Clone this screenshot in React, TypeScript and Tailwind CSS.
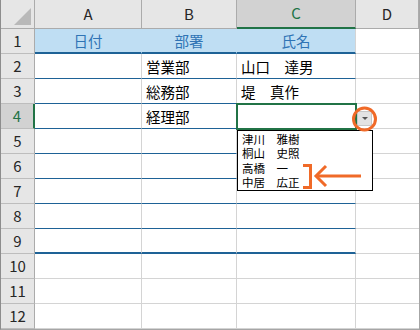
import React from 'react';

const font = { fontFamily: '"Noto Sans CJK JP", "Noto Sans", sans-serif' };

type Row = { n: number; a?: string; b?: string; c?: string };

const rows: Row[] = [
  { n: 1, a: '日付', b: '部署', c: '氏名' },
  { n: 2, b: '営業部', c: '山口　達男' },
  { n: 3, b: '総務部', c: '堤　真作' },
  { n: 4, b: '経理部' },
  { n: 5 },
  { n: 6 },
  { n: 7 },
  { n: 8 },
  { n: 9 },
  { n: 10 },
  { n: 11 },
  { n: 12 },
];

const listItems = ['津川　雅樹', '桐山　史照', '高橋　一', '中居　広正'];

function bottomLine(n: number) {
  if (n === 1 || n === 9) return 'border-b-2 border-b-[#1e6296]';
  if (n < 9) return 'border-b border-b-[#1e6296]';
  return 'border-b border-b-[#d4d4d4]';
}

export default function App() {
  return (
    <div
      className="relative w-[420px] h-[330px] overflow-hidden bg-white border-l border-r border-b border-l-[#8d8d8d] border-r-[#a6a6a6] border-b-[#a6a6a6]"
      style={font}
    >
      <div className="grid grid-cols-[34px_107px_95px_119px_63px]">
        {/* column headers */}
        <div className="relative h-[29px] bg-[#e6e6e6] border-r border-b border-[#ababab]">
          <div className="absolute right-[3px] bottom-[3px] w-0 h-0 border-l-[17px] border-l-transparent border-b-[17px] border-b-[#b9b9b9]" />
        </div>
        {['A', 'B', 'C', 'D'].map((l) => (
          <div
            key={l}
            className={
              l === 'C'
                ? 'h-[29px] flex items-center justify-center text-[15px] bg-[#d2d2d2] text-[#217346] border-r border-r-[#ababab] border-b-2 border-b-[#217346]'
                : 'h-[29px] flex items-center justify-center text-[15px] bg-[#e6e6e6] text-[#262626] border-r border-b border-[#ababab]'
            }
          >
            {l}
          </div>
        ))}

        {rows.map((r) => (
          <React.Fragment key={r.n}>
            <div
              className={
                r.n === 4
                  ? 'h-[25px] flex items-center justify-center text-[15px] bg-[#d2d2d2] text-[#217346] border-r-2 border-r-[#217346] border-b border-b-[#bdbdbd]'
                  : 'h-[25px] flex items-center justify-center text-[15px] bg-[#e6e6e6] text-[#262626] border-r border-r-[#ababab] border-b border-b-[#bdbdbd]'
              }
            >
              {r.n}
            </div>
            {r.n === 1 ? (
              <>
                <div className="h-[25px] flex items-center justify-center text-[14.5px] bg-[#bfdef3] text-[#2f74b5] border-r border-r-[#bfdef3] border-b-2 border-b-[#1e6296]">
                  {r.a}
                </div>
                <div className="h-[25px] flex items-center justify-center text-[14.5px] bg-[#bfdef3] text-[#2f74b5] border-r border-r-[#bfdef3] border-b-2 border-b-[#1e6296]">
                  {r.b}
                </div>
                <div className="h-[25px] flex items-center justify-center text-[14.5px] bg-[#bfdef3] text-[#2f74b5] border-r border-r-[#d4d4d4] border-b-2 border-b-[#1e6296]">
                  {r.c}
                </div>
              </>
            ) : (
              <>
                <div className={`h-[25px] border-r border-r-[#d4d4d4] ${bottomLine(r.n)}`} />
                <div className={`h-[25px] flex items-center pl-[4px] pt-[1px] text-[14.5px] text-black border-r border-r-[#d4d4d4] ${bottomLine(r.n)}`}>
                  {r.b}
                </div>
                <div className={`h-[25px] flex items-center pl-[4px] pt-[1px] text-[14.5px] text-black border-r border-r-[#d4d4d4] ${bottomLine(r.n)}`}>
                  {r.c}
                </div>
              </>
            )}
            <div className="h-[25px] border-b border-b-[#d4d4d4]" />
          </React.Fragment>
        ))}
      </div>

      {/* active cell C4 */}
      <div className="absolute left-[235px] top-[103px] w-[121px] h-[27px] border-2 border-[#217346]" />

      {/* dropdown button */}
      <div className="absolute left-[356px] top-[111px] w-[15px] h-[15px] bg-[#e3e3e3] border border-[#c8c8c8] flex items-center justify-center">
        <div className="w-0 h-0 border-l-[3px] border-r-[3px] border-t-[3px] border-l-transparent border-r-transparent border-t-[#555]" />
      </div>

      {/* dropdown list */}
      <div className="absolute left-[236px] top-[130px] w-[136px] h-[61px] bg-white border border-black pl-[4px] pt-[1px] flex flex-col">
        {listItems.map((t) => (
          <div key={t} className="h-[15px] flex items-center text-[11.5px] leading-none text-black whitespace-pre">
            {t}
          </div>
        ))}
      </div>

      {/* annotations */}
      <svg className="absolute left-0 top-0 pointer-events-none" width="420" height="330">
        <circle cx="363.5" cy="119" r="11" fill="none" stroke="#f06a28" strokeWidth="3" />
        <path d="M302 165.5 H309.5 V187.5 H302" fill="none" stroke="#f06a28" strokeWidth="3" />
        <path d="M315 176 H360" fill="none" stroke="#f06a28" strokeWidth="3" />
        <path d="M325 166 L315 176 L325 186" fill="none" stroke="#f06a28" strokeWidth="3" />
      </svg>
    </div>
  );
}
